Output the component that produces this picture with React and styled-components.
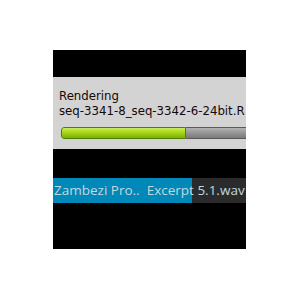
import React from "react";
import styled, { createGlobalStyle } from "styled-components";

const Global = createGlobalStyle`
  html, body { margin: 0; padding: 0; background: #ffffff; }
  #root { width: 300px; height: 300px; }
`;

const Stage = styled.div`
  width: 300px;
  height: 300px;
  padding: 50px 0 0 53px;
  box-sizing: border-box;
`;

const Panel = styled.div`
  width: 193px;
  height: 199px;
  background: #000;
  display: flex;
  flex-direction: column;
  overflow: hidden;
`;

const TopBar = styled.div`
  height: 27px;
  flex: none;
`;

const Dialog = styled.div`
  height: 72px;
  flex: none;
  background: #d3d3d3;
  padding: 12px 0 0 6px;
  box-sizing: border-box;
  display: flex;
  flex-direction: column;
  font-family: "DejaVu Sans", sans-serif;
  font-size: 11.75px;
  line-height: 15px;
  color: #140808;
  white-space: nowrap;
`;

const Line = styled.div``;

const Bar = styled.div`
  margin: 8px 0 0 2px;
  width: 200px;
  height: 12px;
  box-sizing: border-box;
  display: flex;
  border-radius: 3px 0 0 3px;
  overflow: hidden;
`;

const Fill = styled.div`
  width: ${(p) => p.$w}px;
  height: 100%;
  box-sizing: border-box;
  border: 1px solid #4f7d0c;
  border-radius: 3px 0 0 3px;
  background: linear-gradient(#c9ec5a 0%, #b0dc22 35%, #96c80e 65%, #7eae0a 100%);
`;

const Rest = styled.div`
  flex: 1;
  height: 100%;
  box-sizing: border-box;
  border: 1px solid #5a5a5a;
  border-left: none;
  background: linear-gradient(#b4b4b4 0%, #9a9a9a 40%, #8a8a8a 70%, #7a7a7a 100%);
`;

const Gap = styled.div`
  height: ${(p) => p.$h}px;
  flex: none;
`;

const Clip = styled.div`
  position: relative;
  height: 25px;
  flex: none;
  background: #2b2b2b;
  white-space: nowrap;
  overflow: hidden;
`;

const ClipFill = styled.div`
  position: absolute;
  left: 0;
  top: 0;
  bottom: 0;
  width: ${(p) => p.$w}px;
  background: #0088b8;
`;

const ClipText = styled.div`
  position: relative;
  padding-left: 1px;
  font-family: "Open Sans", "Noto Sans", sans-serif;
  font-size: 13.5px;
  line-height: 25px;
  color: #c4d6de;
`;

export default function App() {
  return (
    <>
      <Global />
      <Stage>
        <Panel>
          <TopBar />
          <Dialog>
            <Line>Rendering</Line>
            <Line>seq-3341-8_seq-3342-6-24bit.R</Line>
            <Bar>
              <Fill $w={125} />
              <Rest />
            </Bar>
          </Dialog>
          <Gap $h={29} />
          <Clip>
            <ClipFill $w={139} />
            <ClipText>Zambezi Pro..&nbsp;&nbsp;Excerpt 5.1.wav</ClipText>
          </Clip>
        </Panel>
      </Stage>
    </>
  );
}
